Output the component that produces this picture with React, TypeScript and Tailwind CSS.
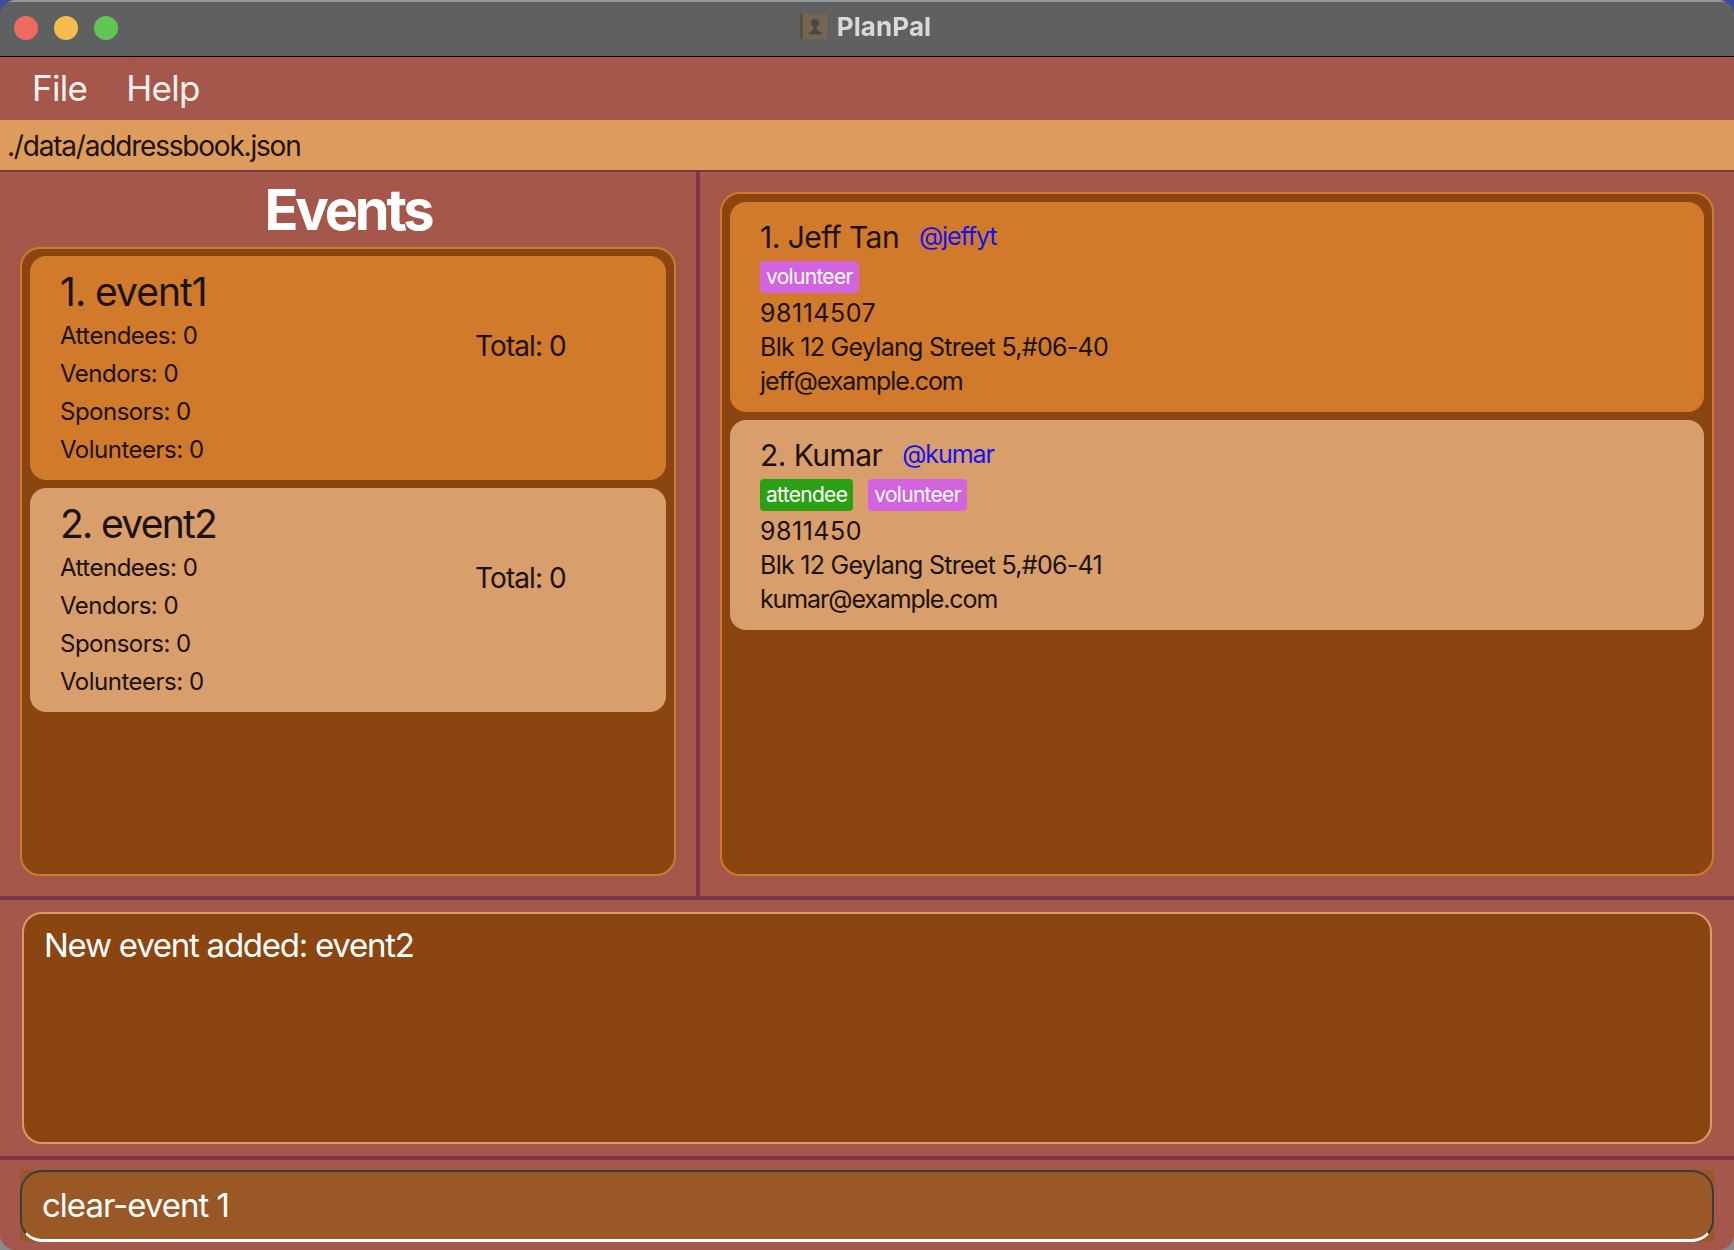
import React from 'react';

const events = [
  { id: 1, name: 'event1', bg: 'bg-[#d17a2b]', titleClass: 'tracking-[-1px]' },
  { id: 2, name: 'event2', bg: 'bg-[#d89e6c]', titleClass: 'tracking-[-1.7px]' },
];

const persons = [
  {
    id: 1,
    name: 'Jeff Tan',
    handle: '@jeffyt',
    tags: ['volunteer'],
    phone: '98114507',
    address: 'Blk 12 Geylang Street 5,#06-40',
    email: 'jeff@example.com',
    bg: 'bg-[#d17a2b]',
  },
  {
    id: 2,
    name: 'Kumar',
    handle: '@kumar',
    tags: ['attendee', 'volunteer'],
    phone: '9811450',
    address: 'Blk 12 Geylang Street 5,#06-41',
    email: 'kumar@example.com',
    bg: 'bg-[#d89e6c]',
  },
];

const EventCard = ({ event }: { event: (typeof events)[number] }) => (
  <div className={`${event.bg} h-[224px] rounded-2xl pl-[30px] pt-[14px] text-[#1c1209]`}>
    <div className={`h-[44px] text-[39px] leading-[44px] ${event.titleClass}`}>
      {event.id}. {event.name}
    </div>
    <div className="mt-[3px] flex">
      <div className="w-[415px] text-[24px] leading-[38px] tracking-[-0.5px]">
        <div>Attendees: 0</div>
        <div>Vendors: 0</div>
        <div>Sponsors: 0</div>
        <div>Volunteers: 0</div>
      </div>
      <div className="mt-[10px] text-[28px] leading-[38px] tracking-[-0.9px]">Total: 0</div>
    </div>
  </div>
);

const PersonCard = ({ person }: { person: (typeof persons)[number] }) => (
  <div className={`${person.bg} h-[210px] rounded-2xl pl-[30px] pt-[17px] text-[#1c1209]`}>
    <div className="flex h-[36px] items-center gap-5">
      <span className="text-[30px] tracking-[-0.55px]">
        {person.id}. {person.name}
      </span>
      <span className="text-[25px] tracking-[-1.1px] text-[#1414f0]">{person.handle}</span>
    </div>
    <div className="mt-[6px] flex gap-[15px]">
      {person.tags.map((tag) => (
        <span
          key={tag}
          className={`flex h-[32px] items-center rounded px-[6px] text-[21px] tracking-[-0.7px] text-white ${
            tag === 'attendee' ? 'bg-[#2ba014]' : 'bg-[#d364e0]'
          }`}
        >
          {tag}
        </span>
      ))}
    </div>
    <div className="mt-[3px] text-[25px] leading-[34px]">
      <div className="tracking-[0.5px]">{person.phone}</div>
      <div className="tracking-[-0.72px]">{person.address}</div>
      <div className="tracking-[-1.1px]">{person.email}</div>
    </div>
  </div>
);

export default function App() {
  return (
    <div className="h-[1250px] bg-linear-to-b from-[#3c4ba3] to-[#8a8a8a] font-['Inter',sans-serif]">
      <div className="flex h-full flex-col overflow-hidden rounded-[16px] bg-[#a4574a]">
        {/* Title bar */}
        <div className="relative flex h-[57px] shrink-0 items-center justify-center border-t-2 border-b border-t-[#98989a] border-b-black bg-[#5f6062]">
          <div className="absolute left-[14px] top-[14px] flex gap-[16px]">
            <div className="size-6 rounded-full bg-[#ee6a5f]" />
            <div className="size-6 rounded-full bg-[#f5bd4f]" />
            <div className="size-6 rounded-full bg-[#61c554]" />
          </div>
          <div className="mt-[-5px] ml-[-3px] flex items-center gap-[10px] blur-[0.4px]">
            <svg width="27" height="25" viewBox="0 0 27 25" aria-hidden="true">
              <rect width="27" height="25" fill="#75664f" />
              <rect width="3" height="25" fill="#57503f" />
              <circle cx="15" cy="9" r="4" fill="#4a4a45" />
              <path d="M13.5 12h3l1 4 4 2.500v2H9v-2l4-2.500z" fill="#4a4a45" />
            </svg>
            <span className="text-[26px] font-bold tracking-[0.1px] text-[#d9d9db]">PlanPal</span>
          </div>
        </div>

        {/* Menu */}
        <div className="flex h-[63px] shrink-0 items-center gap-[39px] pl-[32px] text-[35px] tracking-[-0.7px] text-[#f8f0ee]">
          <span>File</span>
          <span>Help</span>
        </div>

        {/* Path */}
        <div className="flex h-[50px] shrink-0 items-center bg-[#de9b5e] pl-[7px] pt-[2px] text-[28px] tracking-[-1.2px] text-[#20140a]">
          ./data/addressbook.json
        </div>
        <div className="h-[2px] shrink-0 bg-[#7d3645]" />

        {/* Lists */}
        <div className="flex h-[724px] shrink-0">
          <div className="flex w-[696px] shrink-0 flex-col px-5 pb-[20px]">
            <div className="flex h-[75px] items-center justify-center text-[56px] font-bold tracking-[-3.2px] text-white">
              Events
            </div>
            <div className="flex flex-1 flex-col gap-2 rounded-[20px] border-2 border-[#d07a2b] bg-[#8b4511] px-2 pt-[7px]">
              {events.map((event) => (
                <EventCard key={event.id} event={event} />
              ))}
            </div>
          </div>
          <div className="w-1 shrink-0 bg-[#7d3645]" />
          <div className="flex flex-1 flex-col pt-5 pr-5 pb-[20px] pl-5">
            <div className="flex flex-1 flex-col gap-2 rounded-[20px] border-2 border-[#d07a2b] bg-[#8b4511] px-2 pt-2">
              {persons.map((person) => (
                <PersonCard key={person.id} person={person} />
              ))}
            </div>
          </div>
        </div>
        <div className="h-1 shrink-0 bg-[#7d3645]" />

        {/* Result */}
        <div className="flex h-[256px] shrink-0 px-[22px] pt-3 pb-3">
          <div className="flex-1 rounded-[20px] border-2 border-[#d99c66] bg-[#8b4511] pl-5 pt-[11px] text-[33px] leading-[40px] tracking-[-1.25px] text-white">
            New event added: event2
          </div>
        </div>
        <div className="h-1 shrink-0 bg-[#7d3645]" />

        {/* Command box */}
        <div className="flex flex-1 px-5 pt-[10px] pb-2">
          <div className="flex-1 bg-[#9a5827]">
            <div className="flex h-full items-center rounded-[22px] border-2 border-b-[3px] border-[#3c3c3c] border-b-white pl-5 text-[33px] tracking-[-1px] text-white">
              clear-event 1
            </div>
          </div>
        </div>
      </div>
    </div>
  );
}
